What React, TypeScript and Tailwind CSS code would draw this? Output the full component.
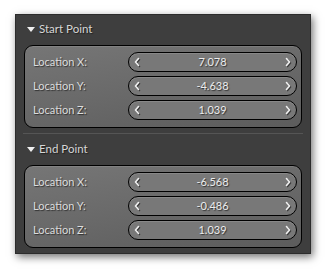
import React from "react";

const Chevron = ({ dir }: { dir: "l" | "r" }) => (
  <svg width="8" height="10" viewBox="0 0 8 10" className="shrink-0" style={{ filter: "drop-shadow(1px 1px 0 rgba(0,0,0,0.5))" }}>
    <polyline
      points={dir === "l" ? "5.5,1.5 2.5,5 5.5,8.5" : "2.5,1.5 5.5,5 2.5,8.5"}
      fill="none"
      stroke="#f0f0f0"
      strokeWidth="1.6"
      strokeLinecap="round"
      strokeLinejoin="round"
    />
  </svg>
);

const Row = ({ label, value }: { label: string; value: string }) => (
  <div className="flex items-center h-[20px]">
    <div className="w-[95px] text-[11px] text-[#dcdcdc] [text-shadow:1px_1px_1px_rgba(0,0,0,0.55)]">{label}</div>
    <div className="w-[169px] h-[20px] rounded-full border border-black bg-[#787878] flex items-center px-[4px] shadow-[inset_0_1px_0_rgba(255,255,255,0.12)]">
      <Chevron dir="l" />
      <div className="flex-1 text-center text-[11px] text-[#ececec] [text-shadow:1px_1px_1px_rgba(0,0,0,0.6)]">{value}</div>
      <Chevron dir="r" />
    </div>
  </div>
);

const Header = ({ title }: { title: string }) => (
  <div className="flex items-center h-[16px]">
    <svg width="8" height="5" viewBox="0 0 8 5" className="ml-[11px] mr-[4px]">
      <polygon points="0,0 8,0 4,5" fill="#f0f0f0" />
    </svg>
    <span className="text-[11.5px] text-[#d6d6d6] [text-shadow:1px_1px_1px_rgba(0,0,0,0.5)]">{title}</span>
  </div>
);

const Group = ({ rows }: { rows: [string, string][] }) => (
  <div className="mx-[8px] h-[83px] rounded-[9px] border border-black bg-[linear-gradient(170deg,#767676_0%,#686868_55%,#5c5c5c_100%)] shadow-[inset_0_1px_0_rgba(255,255,255,0.1)] pl-[8px] pt-[6px] flex flex-col gap-[4px]">
    {rows.map(([l, v]) => (
      <Row key={l} label={l} value={v} />
    ))}
  </div>
);

export default function App() {
  return (
    <div className="w-[326px] h-[270px] bg-white pt-[14px] pl-[15px]" style={{ fontFamily: 'Lato, "Open Sans", sans-serif' }}>
      <div className="w-[296px] h-[240px] bg-[#3e3e3e] border border-[#2c2c2c] shadow-[2px_3px_8px_rgba(0,0,0,0.55)] flex flex-col">
        <div className="mt-[6px]">
          <Header title="Start Point" />
        </div>
        <div className="mt-[8px]">
          <Group
            rows={[
              ["Location X:", "7.078"],
              ["Location Y:", "-4.638"],
              ["Location Z:", "1.039"],
            ]}
          />
        </div>
        <div className="mx-[7px] mt-[5px] h-px bg-[#555555]" />
        <div className="mt-[7px]">
          <Header title="End Point" />
        </div>
        <div className="mt-[8px]">
          <Group
            rows={[
              ["Location X:", "-6.568"],
              ["Location Y:", "-0.486"],
              ["Location Z:", "1.039"],
            ]}
          />
        </div>
      </div>
    </div>
  );
}
